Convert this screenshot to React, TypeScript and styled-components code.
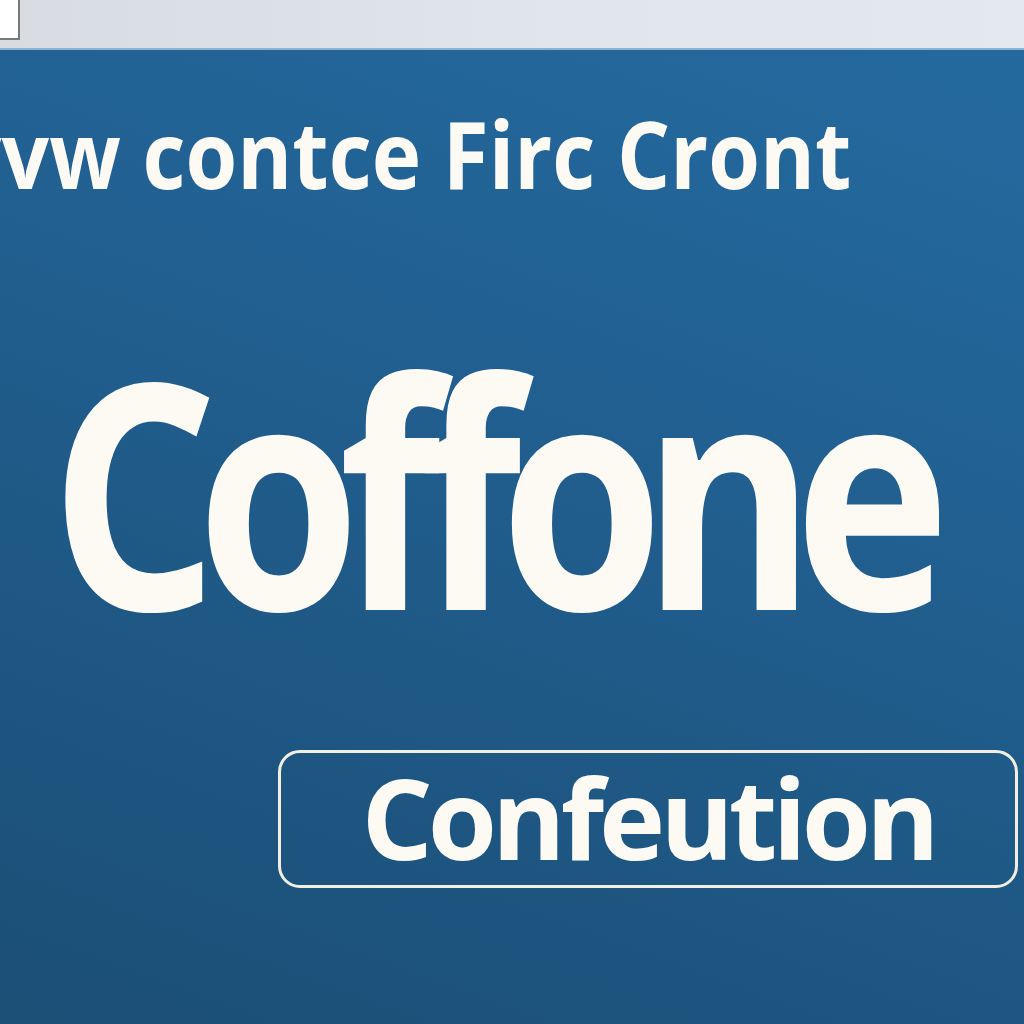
import React from 'react';
import styled, { createGlobalStyle } from 'styled-components';

const GlobalStyle = createGlobalStyle`
    html, body {
        margin: 0;
        padding: 0;
        width: 1024px;
        height: 1024px;
        overflow: hidden;
        font-family: "Open Sans", "Noto Sans", sans-serif;
    }
`;

const Page = styled.div`
    width: 1024px;
    height: 1024px;
    display: flex;
    flex-direction: column;
    overflow: hidden;
`;
const TopBar = styled.div`
    height: 48px;
    flex: none;
    display: flex;
    align-items: flex-start;
    background: linear-gradient(90deg, #d8dce1 0%, #e0e5eb 50%, #e4e9ef 100%);
    border-bottom: 2px solid #8fb2d2;
`;
const CornerBox = styled.div`
    width: 18px;
    height: 38px;
    background: #ffffff;
    border-right: 2px solid #7a7a7a;
    border-bottom: 2px solid #7a7a7a;
`;
const Panel = styled.div`
    flex: 1;
    display: flex;
    flex-direction: column;
    align-items: flex-start;
    padding-top: 56px;
    overflow: hidden;
    background: linear-gradient(200deg, #246a9f 0%, #215f90 40%, #1d5580 75%, #1c4f76 100%);
    color: #fdfaf3;
`;
const Heading = styled.h1`
    margin: 0 0 0 -46px;
    font-size: 94px;
    line-height: 1;
    font-weight: 700;
    white-space: nowrap;
    transform: scaleX(0.89);
    transform-origin: left center;
`;
const BigWord = styled.div`
    margin: 130px 0 0 50px;
    font-size: 315px;
    line-height: 1;
    font-weight: 700;
    letter-spacing: -26px;
    white-space: nowrap;
    transform: scaleX(0.84);
    transform-origin: left center;
`;
const ActionButton = styled.button`
    margin: 105px 0 0 278px;
    width: 740px;
    height: 138px;
    box-sizing: border-box;
    display: flex;
    align-items: center;
    justify-content: center;
    background: transparent;
    border: 3px solid #f3eee2;
    border-radius: 22px;
    color: #fdfaf3;
    font-family: "Open Sans", "Noto Sans", sans-serif;
    font-size: 112px;
    line-height: 1;
    font-weight: 700;
    letter-spacing: -5px;
    padding: 0 0 4px;
    cursor: pointer;
`;

export default function App() {
    return (
        <Page>
            <GlobalStyle />
            <TopBar>
                <CornerBox />
            </TopBar>
            <Panel>
                <Heading>vvw contce Firc Cront</Heading>
                <BigWord>Coffone</BigWord>
                <ActionButton>Confeution</ActionButton>
            </Panel>
        </Page>
    );
}
